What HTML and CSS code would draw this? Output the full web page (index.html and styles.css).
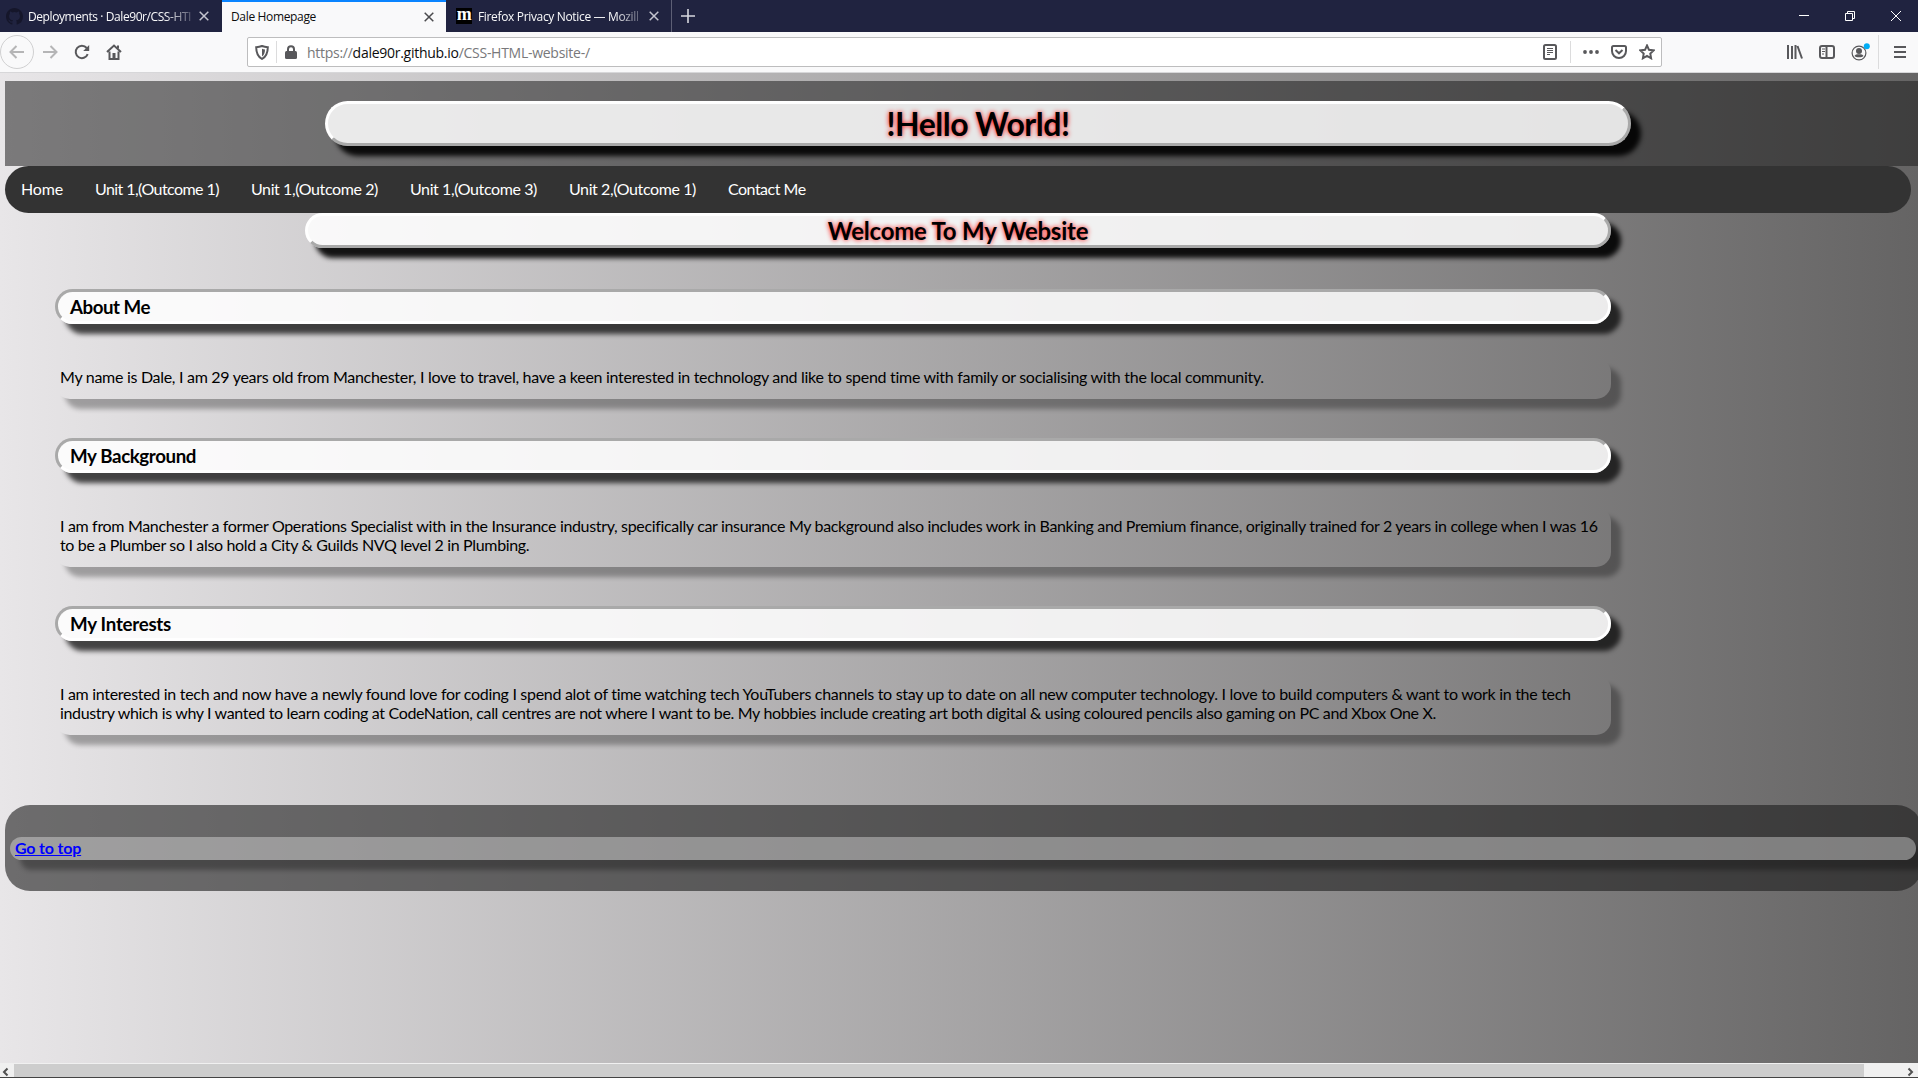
FILE: index.html
```
<!DOCTYPE html>
<html lang="en">
<head>
<meta charset="utf-8">
<title>Dale Homepage</title>
<link rel="stylesheet" href="styles.css">
</head>
<body>
<div class="tabs">
  <div class="tab first">
    <svg class="favicon" width="17" height="17" viewBox="0 0 16 16"><path fill="#15162a" d="M8 0C3.58 0 0 3.58 0 8c0 3.54 2.29 6.53 5.47 7.59.4.07.55-.17.55-.38v-1.49c-2.01.37-2.53-.49-2.69-.94-.09-.23-.48-.94-.82-1.13-.28-.15-.68-.52-.01-.53.63-.01 1.08.58 1.23.82.72 1.21 1.87.87 2.33.66.07-.52.28-.87.51-1.07-1.78-.2-3.64-.89-3.64-3.95 0-.87.31-1.59.82-2.15-.08-.2-.36-1.02.08-2.12 0 0 .67-.21 2.2.82a7.6 7.6 0 0 1 4 0c1.53-1.04 2.2-.82 2.2-.82.44 1.1.16 1.92.08 2.12.51.56.82 1.27.82 2.15 0 3.07-1.87 3.75-3.65 3.95.29.25.54.73.54 1.48v2.2c0 .21.15.46.55.38A8 8 0 0 0 16 8c0-4.42-3.58-8-8-8z"/></svg>
    <span class="tab-title faded">Deployments · Dale90r/CSS-HTI</span>
    <svg class="x" width="10" height="10" viewBox="0 0 10 10"><path d="M.7.7l8.6 8.6M9.3.7L.7 9.3"/></svg>
  </div>
  <div class="tab active">
    <span class="tab-title">Dale Homepage</span>
    <svg class="x" width="10" height="10" viewBox="0 0 10 10"><path d="M.7.7l8.6 8.6M9.3.7L.7 9.3"/></svg>
  </div>
  <div class="tab third">
    <span class="moz">m</span>
    <span class="tab-title faded">Firefox Privacy Notice — Mozill</span>
    <svg class="x" width="10" height="10" viewBox="0 0 10 10"><path d="M.7.7l8.6 8.6M9.3.7L.7 9.3"/></svg>
  </div>
  <svg class="plus" width="14" height="14" viewBox="0 0 14 14"><path d="M7 0v14M0 7h14"/></svg>
  <div class="winbtns">
    <svg width="10" height="10" viewBox="0 0 10 10"><path d="M0 4.5h10"/></svg>
    <svg width="10" height="10" viewBox="0 0 10 10"><path d="M.5 2.5h7v7h-7zM2.5 2.5v-2h7v7h-2"/></svg>
    <svg width="10" height="10" viewBox="0 0 10 10"><path d="M0 0l10 10M10 0L0 10"/></svg>
  </div>
</div>
<div class="toolbar">
  <div class="navbtns">
    <span class="back"><svg width="16" height="16" viewBox="0 0 16 16"><path d="M15 8H2M7.500 2L1.500 8l6 6"/></svg></span>
    <svg class="fwd" width="16" height="16" viewBox="0 0 16 16"><path d="M1 8h13M8.500 2l6 6-6 6"/></svg>
    <svg class="reload" width="16" height="16" viewBox="0 0 16 16"><path d="M13.700 10.200A6.200 6.200 0 1 1 12.700 4"/><path class="fill" d="M15.200 1v6H9.200z"/></svg>
    <svg class="home" width="16" height="16" viewBox="0 0 16 16"><path d="M1 8l7-6.500L15 8M3.500 7.500V15h9V7.500"/><path class="fill" d="M6.500 9h3v5h-3zM11 1.500h2v3h-2z"/></svg>
  </div>
  <div class="urlbar">
    <svg class="shield" width="14" height="15" viewBox="0 0 14 15"><path d="M7 1c2 .8 3.800 1.100 5.800 1.200 0 5.300-.8 9-5.800 11.800C2 11.200 1.200 7.500 1.200 2.200 3.200 2.100 5 1.800 7 1z"/><path class="fill" d="M7 3.700c1 .4 2 .6 3 .7-.1 3.300-.7 5.300-3 7z"/></svg>
    <i class="sep"></i>
    <svg class="lock" width="12" height="14" viewBox="0 0 12 14"><path d="M3 7V4.200a3 3 0 0 1 6 0V7"/><rect class="fill" x="0" y="6" width="12" height="8" rx="1.500"/></svg>
    <span class="url">https://<b>dale90r.github.io</b>/CSS-HTML-website-/</span>
    <div class="urlicons">
      <svg width="14" height="16" viewBox="0 0 14 16"><rect x="1" y="1" width="12" height="14" rx="1.500"/><path class="thin" d="M4 4.500h6M4 6.500h6M4 8.500h6M4 10.500h3"/></svg>
      <i class="sep"></i>
      <svg width="16" height="4" viewBox="0 0 16 4"><g class="fill"><circle cx="2" cy="2" r="1.900"/><circle cx="8" cy="2" r="1.900"/><circle cx="14" cy="2" r="1.900"/></g></svg>
      <svg width="16" height="14" viewBox="0 0 16 14"><path d="M2.500 1h11A1.500 1.500 0 0 1 15 2.500V6A7 7 0 0 1 1 6V2.500A1.500 1.500 0 0 1 2.500 1zM4.500 5L8 8.300 11.500 5"/></svg>
      <svg width="16" height="16" viewBox="0 0 16 16"><path d="M8 1.500l2 4.300 4.700.6-3.400 3.200.8 4.700L8 12l-4.100 2.300.8-4.700L1.300 6.400 6 5.800z"/></svg>
    </div>
  </div>
  <div class="rightbtns">
    <svg width="16" height="14" viewBox="0 0 16 14"><path d="M1 0v14M5 1v13M8.500 0v14M10.500 1l4.500 12.500"/></svg>
    <svg width="16" height="14" viewBox="0 0 16 14"><rect x="1" y="1" width="14" height="12" rx="2"/><path d="M7.500 1v12"/><path class="thin" d="M3 4h3M3 6.500h3M3 9h2"/></svg>
    <svg width="19" height="18" viewBox="0 0 19 18"><circle class="thin" cx="8" cy="10" r="6.900"/><circle class="fill" cx="8" cy="8" r="3"/><path class="fill" d="M3.500 13c1-2 3-1.800 4.500-1.800s3.500-.2 4.500 1.800c-1 1.800-8 1.800-9 0z"/><circle class="dot" cx="15.800" cy="3.200" r="3"/></svg>
    <i class="sep"></i>
    <svg width="12" height="12" viewBox="0 0 12 12"><path d="M0 1h12M0 6h12M0 11h12"/></svg>
  </div>
</div>
<div class="page">
  <header class="header"><h1 class="pill title">!Hello World!</h1></header>
  <nav class="nav">
    <a class="home-link">Home</a><a class="unit-first">Unit 1,(Outcome 1)</a><a class="unit">Unit 1,(Outcome 2)</a><a class="unit">Unit 1,(Outcome 3)</a><a class="unit">Unit 2,(Outcome 1)</a><a class="contact">Contact Me</a>
  </nav>
  <main class="main">
    <h2 class="pill welcome">Welcome To My Website</h2>
    <h3 class="pill topic about">About Me</h3>
    <p><span class="about-line">My name is Dale, I am 29 years old from Manchester, I love to travel, have a keen interested in technology and like to spend time with family or socialising with the local community.</span></p>
    <h3 class="pill topic">My Background</h3>
    <p><span class="background-line">I am from Manchester a former Operations Specialist with in the Insurance industry, specifically car insurance My background also includes work in Banking and Premium finance, originally trained for 2 years in college when I was 16</span><br><span class="tight-line">to be a Plumber so I also hold a City &amp; Guilds NVQ level 2 in Plumbing.</span></p>
    <h3 class="pill topic interests">My Interests</h3>
    <p><span class="interests-line">I am interested in tech and now have a newly found love for coding I spend alot of time watching tech YouTubers channels to stay up to date on all new computer technology. I love to build computers &amp; want to work in the tech</span><br><span class="tight-line">industry which is why I wanted to learn coding at CodeNation, call centres are not where I want to be. My hobbies include creating art both digital &amp; using coloured pencils also gaming on PC and Xbox One X.</span></p>
  </main>
  <footer class="footer"><div class="strip"><a class="top" href="#">Go to top</a></div></footer>
</div>
<div class="scrollbar">
  <svg width="14" height="13" viewBox="0 0 14 13"><path d="M7.500 4.500L4 8l3.500 3.500"/></svg>
  <div class="thumb"></div>
  <svg width="14" height="13" viewBox="0 0 14 13"><path d="M4.500 4.500L8 8l-3.500 3.500"/></svg>
</div>
</body>
</html>
```
FILE: styles.css
```
* { box-sizing: border-box; }
html, body { height: 100%; }
body {
  margin: 0;
  display: flex;
  flex-direction: column;
  overflow: hidden;
  font: 16px/19.4px Lato, sans-serif;
  font-variant-ligatures: none;
  color: #000;
}
svg { display: block; flex: none; fill: none; stroke: #58585b; stroke-width: 2; }
svg .fill { fill: #58585b; stroke: none; }
svg .thin { stroke-width: 1.2; }
svg .dot { fill: #00adf5; stroke: none; }
span { white-space: nowrap; }

/* browser tabs */
.tabs { flex: none; height: 32px; display: flex; align-items: center; background: #202340; color: #f9f9fa; font: 12px/16px "Open Sans", sans-serif; letter-spacing: -.34px; }
.tab { height: 32px; display: flex; align-items: center; }
.tab .x { stroke: #c4c5cf; stroke-width: 1.5; }
.first { width: 222px; padding: 0 13px 0 6px; }
.favicon { stroke: none; margin-right: 5px; }
.tab-title { flex: 1; min-width: 0; padding-top: 1px; }
.faded { -webkit-mask-image: linear-gradient(to right, #000 82%, transparent 103%); mask-image: linear-gradient(to right, #000 82%, transparent 103%); margin-right: 4px; }
.first .faded { letter-spacing: -.42px; }
.active { width: 224px; padding: 0 12px 0 9px; background: #f9f9fa; border-top: 2px solid #0a84ff; color: #0c0c0d; }
.active .tab-title { padding: 0; margin-top: -1px; }
.tab.active .x { stroke: #4a4a4d; }
.third { width: 226px; padding: 0 12px 0 10px; border-right: 1px solid #5d5f75; }
.moz { width: 16px; height: 16px; margin-right: 6px; background: #000; color: #fff; font: 700 18px/13px "Liberation Serif", serif; text-align: center; }
.plus { margin-left: 9px; stroke: #d6d7de; stroke-width: 1.6; }
.winbtns { margin-left: auto; display: flex; gap: 36px; padding-right: 17px; }
.winbtns svg { stroke: #fff; stroke-width: 1; }

/* browser toolbar */
.toolbar { flex: none; height: 41px; display: flex; align-items: center; background: #f9f9fa; border-bottom: 1px solid #d7d7d9; }
.navbtns { width: 247px; display: flex; align-items: center; }
.back { width: 34px; height: 34px; border: 1px solid #d0d0d1; border-radius: 50%; display: grid; place-items: center; }
.back svg, .fwd { stroke: #b5b5b6; }
.fwd { margin: 0 16px 0 8px; }
.reload { margin-right: 16px; }
.urlbar { width: 1415px; height: 30px; display: flex; align-items: center; padding: 0 6px 0 7px; background: #fff; border: 1px solid #bdbdbe; border-radius: 2px; }
.sep { flex: none; width: 1px; height: 22px; background: #dcdcdd; }
.shield { margin-right: 7px; }
.lock { margin: 0 10px 0 8px; }
.url { padding-top: 2px; color: #78787a; font: 14px/20px "Open Sans", sans-serif; letter-spacing: -.27px; }
.url b { color: #0c0c0d; font-weight: 400; }
.urlicons { margin-left: auto; display: flex; align-items: center; gap: 12px; }
.urlicons .sep { margin-left: 1px; }
.rightbtns { margin-left: auto; padding-right: 12px; display: flex; align-items: center; gap: 16px; }
.rightbtns .sep { height: 34px; margin: 0 -1px 0 -8px; }

/* web page */
.page { flex: 1; min-height: 0; overflow: hidden; padding: 8px 0 0 5px; background: linear-gradient(to right, #e8e6e8, #656464); }
.pill { margin: 0; border: 3px solid; border-radius: 25px; background: rgba(255,255,255,.855); }
.title, .welcome { border-color: #fff #a9a9a9 #a9a9a9 #fff; text-align: center; text-shadow: 0 0 5px red; }
.header { height: 85px; padding: 20px 0 0 320px; background: rgba(32,32,32,.547); }
.title { width: 1306px; height: 45px; font-size: 32px; line-height: 39px; letter-spacing: -.48px; box-shadow: 10px 10px 5px rgba(0,0,0,.9); }
.nav { width: 1906px; height: 47px; display: flex; background: #333; border-radius: 25px; color: #fff; }
.nav a { padding: 13px 16px; }
.home-link { letter-spacing: -.18px; }
.unit-first { letter-spacing: -.56px; }
.unit { letter-spacing: -.395px; }
.contact { letter-spacing: -.5px; }
.main { width: 1606px; padding-left: 50px; }
.welcome { margin-left: 250px; height: 35px; font-size: 24px; line-height: 29px; letter-spacing: -.24px; box-shadow: 10px 10px 5px rgba(0,0,0,.91); }
.topic { height: 35px; padding-left: 12px; font-size: 18.72px; line-height: 30px; letter-spacing: -.39px; border-color: #a9a9a9 #fff #fff #a9a9a9; box-shadow: 10px 10px 5px rgba(0,0,0,.7); }
.about { margin-top: 41px; letter-spacing: -.47px; }
.interests { letter-spacing: -.27px; }
.main p { margin: 34px 0 39px; padding: 9px 5px 13px; line-height: 19px; border-radius: 15px; box-shadow: 10px 10px 5px rgba(0,0,0,.3); }
.about-line { letter-spacing: -.29px; }
.background-line { letter-spacing: -.332px; }
.interests-line { letter-spacing: -.302px; }
.tight-line { letter-spacing: -.341px; }
.footer { margin-top: 70px; width: 1917px; height: 86px; padding: 32px 6px 0 5px; background: rgba(29,29,29,.606); border-radius: 25px; }
.strip { height: 23px; padding: 1px 5px; border-radius: 12px; background: rgba(255,255,255,.35); box-shadow: 10px 10px 5px rgba(0,0,0,.3); }
.top { color: #00f; font-weight: 700; letter-spacing: -.18px; }

/* horizontal scrollbar */
.scrollbar { flex: none; height: 15px; display: flex; background: #f0f0f0; border-top: 1px solid #f0f0f0; border-bottom: 1px solid #444; }
.scrollbar svg { stroke: #505050; }
.thumb { width: 1850px; background: #cdcdcd; margin-right: 40px; }
```
